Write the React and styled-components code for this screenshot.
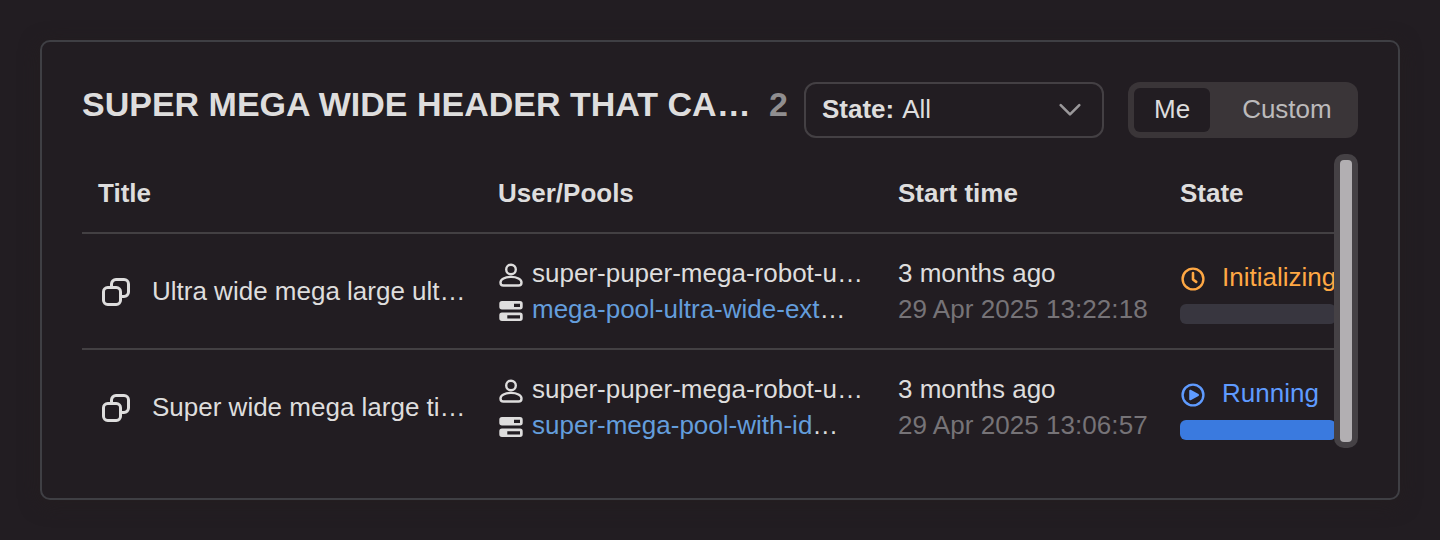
import React from 'react';
import styled, { createGlobalStyle } from 'styled-components';

const GlobalStyle = createGlobalStyle`
  * { box-sizing: border-box; }
  body {
    margin: 0;
    background: #221d22;
    color: #dedddd;
    font-family: "Liberation Sans", Arial, sans-serif;
    font-size: 26px;
    line-height: 36px;
    overflow: hidden;
  }
`;

const Page = styled.main`
  height: 540px;
  padding: 40px;
`;

const Card = styled.section`
  height: 460px;
  padding: 40px;
  border: 2px solid #3f3f44;
  border-radius: 10px;
  box-shadow: 0 4px 20px rgba(36, 30, 30, 0.6);
`;

const Header = styled.header`
  display: flex;
  align-items: flex-start;
  height: 56px;
`;

const Heading = styled.h2`
  display: flex;
  justify-content: space-between;
  width: 706px;
  margin: 0 16px 0 0;
  padding-top: 2px;
  font-size: 34px;
  line-height: 40px;
  font-weight: 700;
  white-space: nowrap;
`;

const Count = styled.span`
  color: #908e90;
`;

const Select = styled.div`
  display: flex;
  align-items: center;
  gap: 8px;
  width: 300px;
  height: 56px;
  padding: 0 18px 2px 16px;
  border: 2px solid #444044;
  border-radius: 12px;
  svg { margin: 2px 0 0 auto; }
`;

const Segmented = styled.div`
  display: flex;
  gap: 12px;
  width: 230px;
  height: 56px;
  margin-left: 24px;
  padding: 6px;
  border-radius: 12px;
  background: #3a3538;
`;

const Segment = styled.div`
  flex: none;
  height: 44px;
  padding: 0 20px;
  line-height: 42px;
  border-radius: 6px;
  color: ${(p) => (p.$active ? '#dedddd' : '#bcbabb')};
  background: ${(p) => (p.$active ? '#221d22' : 'transparent')};
`;

const TableArea = styled.div`
  display: flex;
  height: 294px;
  margin-top: 16px;
`;

const Viewport = styled.div`
  width: 1252px;
  overflow: hidden;
`;

const Row = styled.div`
  display: grid;
  grid-template-columns: 400px 400px 282px 240px;
  align-items: center;
  width: 1322px;
  height: ${(p) => (p.$head ? 80 : 116)}px;
  padding-bottom: ${(p) => (p.$head ? 0 : 1)}px;
  border-bottom: 2px solid ${(p) => (p.$last ? 'transparent' : '#434043')};
  font-weight: ${(p) => (p.$head ? 700 : 400)};
  white-space: nowrap;
`;

const Cell = styled.div`
  padding: 0 16px;
`;

const TitleCell = styled(Cell)`
  display: flex;
  align-items: center;
  gap: 20px;
  padding-left: 18px;
  svg { margin-top: 2px; }
`;

const Line = styled.div`
  display: flex;
  align-items: center;
  height: 36px;
  svg { margin: 4px 8px 0 0; }
`;

const Link = styled.span`
  color: #649ddc;
`;

const Muted = styled.div`
  color: #767377;
  letter-spacing: 0.05px;
`;

const Status = styled.div`
  display: flex;
  align-items: center;
  height: 36px;
  padding-top: 2px;
  margin-bottom: 10px;
  color: ${(p) => p.$color};
  svg { margin: 4px 16px 0 0; }
`;

const Progress = styled.div`
  width: 156px;
  height: 20px;
  border-radius: 6px;
  background: ${(p) => p.$color};
`;

const ScrollTrack = styled.div`
  width: 24px;
  height: 294px;
  padding: 6px;
  border-radius: 10px;
  background: #454145;
`;

const ScrollThumb = styled.div`
  height: 282px;
  border-radius: 4px;
  background: #b2afb2;
`;

const CopyIcon = () => (
  <svg width="32" height="32" viewBox="0 0 16 16" fill="none" stroke="currentColor" strokeWidth="1.5">
    <rect x="1.75" y="5.75" width="8.5" height="8.5" rx="2.1" />
    <path d="M5.75 5.5V4a2.25 2.25 0 0 1 2.25-2.25h4A2.25 2.25 0 0 1 14.25 4v4A2.25 2.25 0 0 1 12 10.25h-1.5" />
  </svg>
);

const PersonIcon = () => (
  <svg width="26" height="26" viewBox="0 0 26 26" fill="none" stroke="currentColor" strokeWidth="2.4">
    <circle cx="13" cy="7.5" r="4.8" />
    <path d="M2.5 20.4C2.5 17.2 7 14.9 13 14.9s10.5 2.3 10.5 5.5c0 2-1.3 3.1-3 3.1h-15c-1.7 0-3-1.1-3-3.1Z" />
  </svg>
);

const PoolIcon = () => (
  <svg width="26" height="26" viewBox="0 0 26 26" fill="currentColor" fillRule="evenodd">
    <path d="M4 3h18a2.7 2.7 0 0 1 2.7 2.7v3.1a2.7 2.7 0 0 1-2.7 2.7H4a2.7 2.7 0 0 1-2.7-2.7V5.7A2.7 2.7 0 0 1 4 3Zm12 2.7v3.2h6V5.7Z" />
    <path d="M4 14.5h18a2.7 2.7 0 0 1 2.7 2.7v3.1A2.7 2.7 0 0 1 22 23H4a2.7 2.7 0 0 1-2.7-2.7v-3.1A2.7 2.7 0 0 1 4 14.5Zm5.3 2.7v3.2H22v-3.2Z" />
  </svg>
);

const ClockIcon = () => (
  <svg width="26" height="26" viewBox="0 0 26 26" fill="none" stroke="currentColor" strokeWidth="2.4">
    <circle cx="13" cy="13" r="10.4" />
    <path d="M13 7v6.5l3.2 2.4" strokeWidth="2.6" strokeLinecap="round" strokeLinejoin="round" />
  </svg>
);

const PlayIcon = () => (
  <svg width="26" height="26" viewBox="0 0 26 26" fill="none" stroke="currentColor" strokeWidth="2.4">
    <circle cx="13" cy="13" r="10.4" />
    <path d="M10.2 8.7v8.6l7.8-4.3Z" fill="currentColor" strokeWidth="2" strokeLinejoin="round" />
  </svg>
);

const ChevronIcon = () => (
  <svg width="28" height="28" viewBox="0 0 28 28" fill="none" stroke="#9a989a" strokeWidth="2.6" strokeLinecap="round" strokeLinejoin="round">
    <path d="M4.7 9.2 14 18.4l9.3-9.2" />
  </svg>
);

const operations = [
  {
    title: 'Ultra wide mega large ult…',
    user: 'super-puper-mega-robot-u…',
    pool: 'mega-pool-ultra-wide-ext',
    ago: '3 months ago',
    date: '29 Apr 2025 13:22:18',
    state: 'Initializing',
    Icon: ClockIcon,
    color: '#ffa844',
    bar: '#38363f',
  },
  {
    title: 'Super wide mega large ti…',
    user: 'super-puper-mega-robot-u…',
    pool: 'super-mega-pool-with-id',
    ago: '3 months ago',
    date: '29 Apr 2025 13:06:57',
    state: 'Running',
    Icon: PlayIcon,
    color: '#5f9bff',
    bar: '#3a7adf',
  },
];

export default function App() {
  return (
    <Page>
      <GlobalStyle />
      <Card>
        <Header>
          <Heading>
            <span>SUPER MEGA WIDE HEADER THAT CA…</span>
            <Count>2</Count>
          </Heading>
          <Select>
            <b>State:</b>
            <span>All</span>
            <ChevronIcon />
          </Select>
          <Segmented>
            <Segment $active>Me</Segment>
            <Segment>Custom</Segment>
          </Segmented>
        </Header>
        <TableArea>
          <Viewport>
            <Row $head>
              <Cell>Title</Cell>
              <Cell>User/Pools</Cell>
              <Cell>Start time</Cell>
              <Cell>State</Cell>
            </Row>
            {operations.map((op, i) => (
              <Row key={op.date} $last={i === operations.length - 1}>
                <TitleCell>
                  <CopyIcon />
                  <span>{op.title}</span>
                </TitleCell>
                <Cell>
                  <Line><PersonIcon />{op.user}</Line>
                  <Line><PoolIcon /><Link>{op.pool}</Link>…</Line>
                </Cell>
                <Cell>
                  <div>{op.ago}</div>
                  <Muted>{op.date}</Muted>
                </Cell>
                <Cell>
                  <Status $color={op.color}><op.Icon />{op.state}</Status>
                  <Progress $color={op.bar} />
                </Cell>
              </Row>
            ))}
          </Viewport>
          <ScrollTrack><ScrollThumb /></ScrollTrack>
        </TableArea>
      </Card>
    </Page>
  );
}
